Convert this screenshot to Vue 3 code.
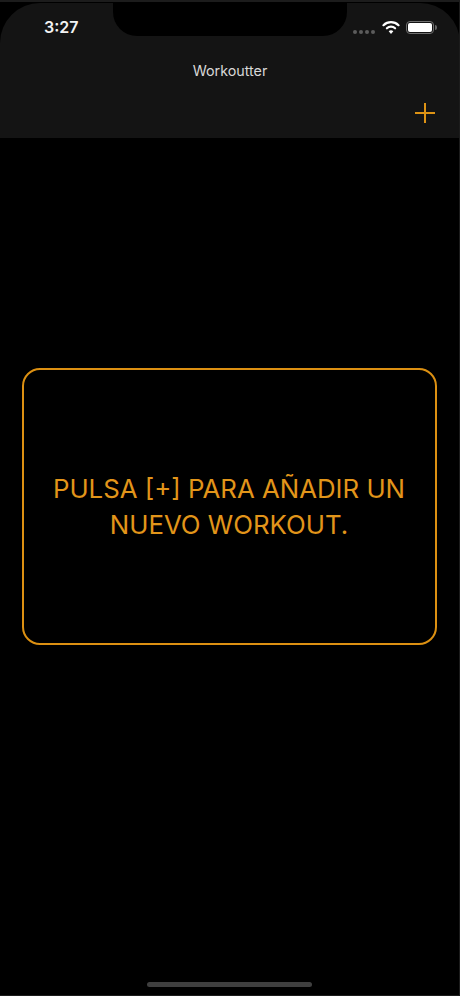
<script setup>
const title = 'Workoutter'
const message = 'PULSA [+] PARA AÑADIR UN NUEVO WORKOUT.'
</script>

<template>
  <div class="screen">
    <header class="nav">
      <div class="notch"></div>
      <div class="status">
        <span class="time">3:27</span>
        <div class="indicators">
          <div class="signal"><i></i><i></i><i></i><i></i></div>
          <svg class="wifi" viewBox="0 0 18 14" width="18" height="14">
            <path d="M1.500 5.200C3.500 3.300 6.100 2.200 9 2.200s5.500 1.100 7.500 3" fill="none" stroke="#fff" stroke-width="2.200" stroke-linecap="round"/>
            <path d="M4.900 8.300C6 7.200 7.400 6.600 9 6.600s3 .6 4.100 1.700" fill="none" stroke="#fff" stroke-width="2.200" stroke-linecap="round"/>
            <path d="M9 14 6.700 11.200C7.300 10.600 8.100 10.300 9 10.300s1.700.3 2.300.9z" fill="#fff"/>
          </svg>
          <div class="battery"><div class="cell"></div></div>
        </div>
      </div>
      <div class="title">{{ title }}</div>
      <div class="actions">
        <svg class="plus" viewBox="0 0 20 20" width="20" height="20">
          <path d="M10 0v20M0 10h20" stroke="#dd9315" stroke-width="2" fill="none"/>
        </svg>
      </div>
    </header>
    <main class="content">
      <div class="card">
        <p class="message">{{ message }}</p>
      </div>
    </main>
    <div class="home-bar"></div>
  </div>
</template>

<style>
html, body { margin: 0; background: #000; }
</style>

<style scoped>
.screen {
  width: 460px;
  height: 996px;
  background: #000;
  display: flex;
  flex-direction: column;
  overflow: hidden;
  position: relative;
  font-family: Inter, "Liberation Sans", sans-serif;
}
.screen::before {
  content: "";
  position: absolute;
  inset: 0;
  border-style: solid;
  border-color: #1c1c1c;
  border-width: 2px 1px 1px 0;
  pointer-events: none;
  z-index: 1;
}
.nav {
  height: 135px;
  margin-top: 3px;
  background: #141414;
  border-radius: 40px 40px 0 0;
  position: relative;
  flex: none;
  display: flex;
  flex-direction: column;
}
.notch {
  position: absolute;
  left: 113px;
  top: 0;
  width: 234px;
  height: 33px;
  background: #000;
  border-radius: 0 0 24px 24px;
}
.status {
  height: 48px;
  padding: 13px 26px 0 44px;
  box-sizing: border-box;
  display: flex;
  justify-content: space-between;
  align-items: flex-start;
}
.time {
  color: #f2f2f2;
  font-size: 16px;
  font-weight: 600;
  line-height: 22px;
}
.indicators {
  display: flex;
  align-items: flex-start;
  gap: 6px;
  margin-top: 3px;
}
.signal {
  display: flex;
  gap: 2px;
  margin-top: 11px;
  margin-right: 1px;
}
.signal i {
  width: 4px;
  height: 4px;
  border-radius: 50%;
  background: #5c5c5c;
}
.wifi { margin-top: 1px; }
.battery {
  width: 28px;
  height: 13px;
  box-sizing: border-box;
  border: 1.500px solid #6f6f6f;
  border-radius: 4px;
  padding: 1px;
  margin-top: 2px;
  position: relative;
}
.battery::after {
  content: "";
  position: absolute;
  right: -4px;
  top: 2.500px;
  width: 2px;
  height: 5px;
  background: #666;
  border-radius: 0 2px 2px 0;
}
.cell {
  height: 100%;
  background: #fff;
  border-radius: 2px;
}
.title {
  color: #d8d8d8;
  font-size: 14.300px;
  line-height: 18px;
  text-align: center;
  margin-top: 11px;
}
.actions {
  display: flex;
  justify-content: flex-end;
  padding: 23px 25px 0 0;
}
.plus { display: block; }
.content {
  flex: 1;
  padding: 230px 0 0 22px;
}
.card {
  width: 415px;
  height: 277px;
  box-sizing: border-box;
  border: 2px solid #dc9012;
  border-radius: 18px;
  display: flex;
  align-items: center;
  justify-content: center;
  padding: 0 25px 0 24px;
}
.message {
  margin: 0;
  color: #e2951a;
  font-size: 25.800px;
  line-height: 36px;
  text-align: center;
}
.home-bar {
  position: absolute;
  left: 147px;
  bottom: 9px;
  width: 165px;
  height: 5px;
  border-radius: 3px;
  background: #3f3f3f;
}
</style>
